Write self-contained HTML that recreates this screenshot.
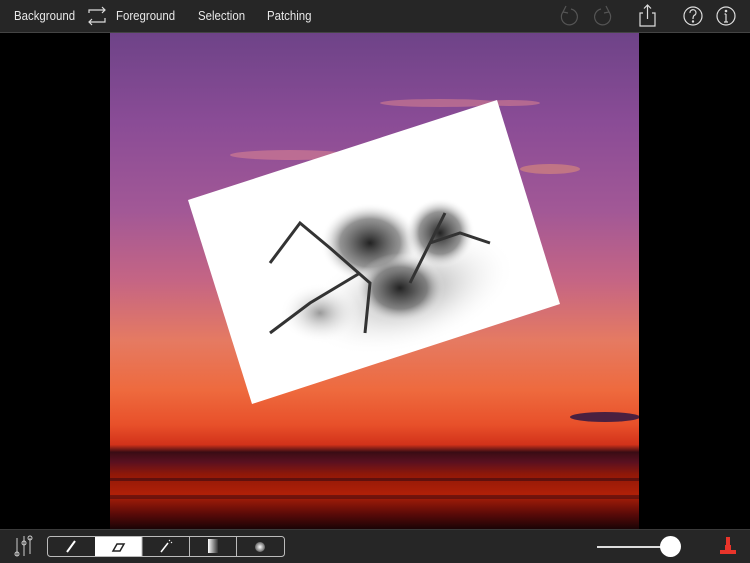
<!DOCTYPE html>
<html><head><meta charset="utf-8"><style>
html,body{margin:0;padding:0;background:#000;width:750px;height:562px;overflow:hidden;font-family:"Liberation Sans",sans-serif}
.top{position:absolute;left:0;top:0;width:750px;height:32px;background:#262626;border-bottom:1px solid #444}
.top span{position:absolute;top:8px;color:#e8e8e8;font-size:13px;transform:scaleX(0.88);transform-origin:left}
.bot{position:absolute;left:0;top:529px;width:750px;height:33px;background:#262626;border-top:1px solid #3a3a3a}
</style></head><body>
<div class="top">
<span style="left:14px">Background</span>
<span style="left:116px">Foreground</span>
<span style="left:198px">Selection</span>
<span style="left:267px">Patching</span>
<svg style="position:absolute;left:0;top:0" width="750" height="32" fill="none" stroke="#ddd" stroke-width="1.2">
<path d="M89 13 V10 H105 M102 7 L105 10 L102 13 M105 18 V22 H89 M92 19 L89 22 L92 25"/>
<g stroke="#555"><path d="M563 12 A8 8 0 1 0 571 9 M566 6 L563 12 L568 13"/>
<path d="M609 12 A8 8 0 1 1 601 9 M606 6 L609 12 L604 13"/></g>
<path d="M643 13 H640 V26 H655 V13 H652 M647.5 19 V5 M644 8.5 L647.5 5 L651 8.5"/>
<circle cx="693" cy="16" r="9"/><circle cx="726" cy="16" r="9"/>
<path d="M690 13 A3 3 0 1 1 694 15.5 Q693 16.5 693 19"/><circle cx="693" cy="21.5" r="0.6" fill="#ddd"/>
<path d="M726 14 V22 M724.5 14 H726 M724 22 H728"/><circle cx="726" cy="11" r="0.7" fill="#ddd"/>
</svg>
</div>
<svg style="position:absolute;left:110px;top:33px" width="529" height="496">
<defs>
<linearGradient id="sky" x1="0" y1="0" x2="0" y2="1">
<stop offset="0" stop-color="#6e4388"/><stop offset="0.18" stop-color="#8a4c96"/>
<stop offset="0.36" stop-color="#a25896"/><stop offset="0.5" stop-color="#c56584"/>
<stop offset="0.62" stop-color="#e57a62"/><stop offset="0.72" stop-color="#ee6a3e"/>
<stop offset="0.79" stop-color="#e8502a"/><stop offset="0.83" stop-color="#d2321a"/>
<stop offset="0.845" stop-color="#3a0c14"/><stop offset="0.865" stop-color="#5a1020"/>
<stop offset="0.89" stop-color="#901808"/><stop offset="0.93" stop-color="#b02008"/>
<stop offset="0.97" stop-color="#5a0a08"/><stop offset="1" stop-color="#1a0406"/>
</linearGradient>
<radialGradient id="t"><stop offset="0" stop-color="#222"/><stop offset="0.6" stop-color="#666" stop-opacity="0.7"/><stop offset="1" stop-color="#fff" stop-opacity="0"/></radialGradient>
<radialGradient id="t2"><stop offset="0" stop-color="#999"/><stop offset="1" stop-color="#fff" stop-opacity="0"/></radialGradient>
</defs>
<rect width="529" height="496" fill="url(#sky)"/>
<g fill="#f09090" opacity="0.45">
<ellipse cx="330" cy="70" rx="60" ry="4"/><ellipse cx="400" cy="70" rx="30" ry="3"/>
<ellipse cx="180" cy="122" rx="60" ry="5"/><ellipse cx="440" cy="136" rx="30" ry="5" fill="#f4a070"/>
</g>
<rect x="0" y="445" width="529" height="3" fill="#3a0a10" opacity="0.6"/>
<rect x="0" y="462" width="529" height="4" fill="#3a0a10" opacity="0.5"/>
<ellipse cx="495" cy="384" rx="35" ry="5" fill="#4a2040"/>
<polygon points="78,167 387,67 450,271 142,371" fill="#fff"/>
<g>
<ellipse cx="300" cy="260" rx="110" ry="55" fill="url(#t2)" transform="rotate(-18 300 260)"/>
<ellipse cx="260" cy="210" rx="50" ry="40" fill="url(#t)"/>
<ellipse cx="330" cy="200" rx="35" ry="35" fill="url(#t)"/>
<ellipse cx="290" cy="255" rx="45" ry="35" fill="url(#t)"/>
<ellipse cx="210" cy="280" rx="40" ry="30" fill="url(#t2)"/>
<path d="M255 300 L260 250 L220 215 L190 190 L160 230 M300 250 L320 210 L335 180 M320 210 L350 200 L380 210 M250 240 L200 270 L160 300" stroke="#333" stroke-width="3" fill="none"/>
</g>
</svg>
<div class="bot">
<svg style="position:absolute;left:0;top:0" width="750" height="33" fill="none" stroke="#ccc" stroke-width="1">
<path d="M17 8 V26 M24 6 V26 M30 8 V24"/><circle cx="17" cy="24" r="2"/><circle cx="24" cy="13" r="2"/><circle cx="30" cy="8" r="2"/>
<rect x="47.5" y="6.5" width="237" height="20" rx="3" stroke="#bbb"/>
<rect x="95" y="7" width="47" height="19" fill="#fff" stroke="none"/>
<path d="M142 7 V26 M189.5 7 V26 M236.5 7 V26" stroke="#bbb"/>
<path d="M67 22 L75 11" stroke="#fff" stroke-width="2"/>
<path d="M113 21 L117 14 H124 L120 21 Z" stroke="#222" stroke-width="1.5"/>
<path d="M161 22 L168 13" stroke="#fff" stroke-width="1.5"/><path d="M169 10 l1 1 M171 12 l1 1" stroke="#fff"/>
</svg>
<div style="position:absolute;left:208px;top:9px;width:10px;height:14px;background:linear-gradient(90deg,#fff,#333)"></div>
<div style="position:absolute;left:255px;top:12px;width:10px;height:10px;border-radius:50%;background:radial-gradient(#fff,#262626)"></div>
<div style="position:absolute;left:597px;top:16px;width:70px;height:2px;background:#ddd"></div>
<div style="position:absolute;left:660px;top:6px;width:21px;height:21px;border-radius:50%;background:#fff"></div>
<svg style="position:absolute;left:718px;top:6px" width="20" height="22"><path d="M8 1 H12 V9 H8 Z M7 9 H13 V14 H7Z M2 14 H18 V18 H2 Z" fill="#e8342a"/></svg>
</div>
</body></html>
